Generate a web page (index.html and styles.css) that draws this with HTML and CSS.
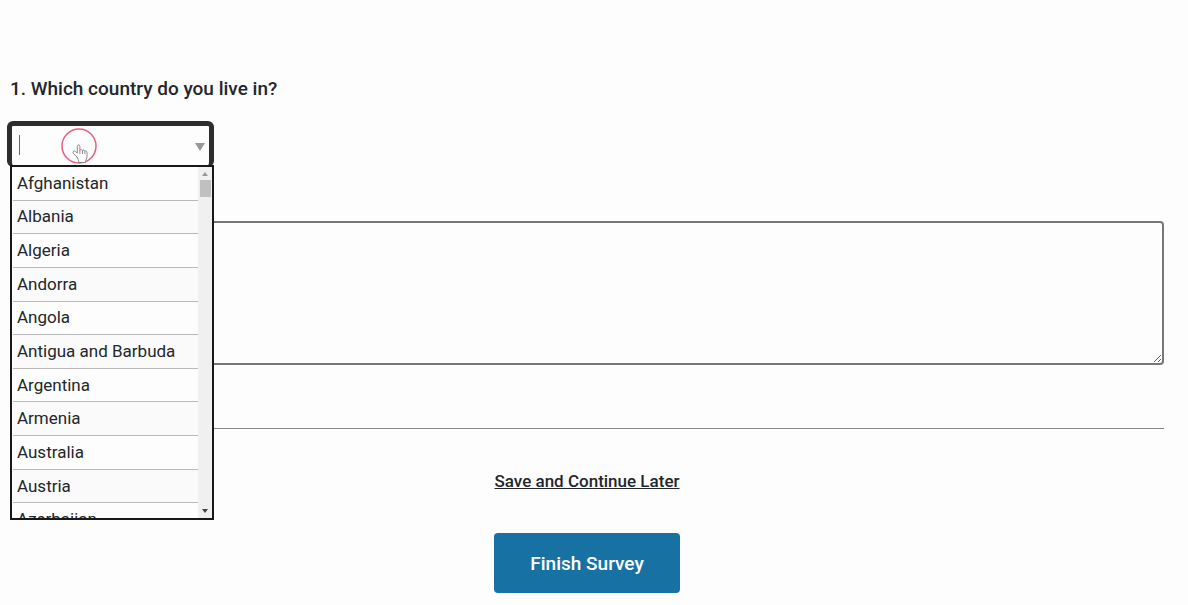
FILE: index.html
```
<!DOCTYPE html>
<html lang="en">
<head>
  <meta charset="UTF-8">
  <title>Survey</title>
  <link rel="stylesheet" href="styles.css">
</head>
<body>
  <form class="survey">
    <div class="question">
      <label class="question-title" for="country">1. Which country do you live in?</label>
      <div class="combo">
        <input type="text" id="country" class="combo-input" role="combobox" aria-expanded="true" aria-controls="country-list" autocomplete="off">
        <span class="caret"></span>
        <span class="arrow"></span>

        <!-- Open country menu -->
        <div class="menu">
          <ul class="options" id="country-list" role="listbox">
            <li role="option">Afghanistan</li>
            <li role="option">Albania</li>
            <li role="option">Algeria</li>
            <li role="option">Andorra</li>
            <li role="option">Angola</li>
            <li role="option">Antigua and Barbuda</li>
            <li role="option">Argentina</li>
            <li role="option">Armenia</li>
            <li role="option">Australia</li>
            <li role="option">Austria</li>
            <li role="option">Azerbaijan</li>
          </ul>
          <div class="scrollbar">
            <span class="scroll-up"></span>
            <span class="scroll-thumb"></span>
            <span class="scroll-down"></span>
          </div>
        </div>

        <svg class="pointer" width="38" height="38" viewBox="0 0 38 38">
          <circle cx="19" cy="19" r="17" fill="none" stroke="#e5607f" stroke-width="1.5"/>
          <path d="M17 30 L13.2 26 C12.2 24.4 14.3 23.2 15.7 24.6 L17.3 26.2 V19.3 C17.3 17.4 19.9 17.4 19.9 19.3 V23.4 C20.3 22.2 22.4 22.4 22.5 23.7 C23 22.8 24.7 23 24.9 24.3 C25.6 23.6 27 24 27 25.4 V29.5 C27 31.5 25.7 32.5 25.5 35.5 H18.8 C18.7 33 17.8 31.4 17 30 Z" fill="#fff" stroke="#888" stroke-width="1"/>
          <path d="M19.9 23.4 V27 M22.5 23.7 V27 M24.9 24.3 V27" fill="none" stroke="#888" stroke-width="1"/>
        </svg>
      </div>
    </div>

    <textarea class="comments" aria-label="Comments"></textarea>
    <hr class="divider">

    <div class="actions">
      <a class="save-link" href="#">Save and Continue Later</a>
      <button class="finish" type="submit">Finish Survey</button>
    </div>
  </form>
</body>
</html>
```
FILE: styles.css
```
* {
  box-sizing: border-box;
}

body {
  margin: 0;
  background: #fdfdfd;
  color: #23272b;
  font-family: Roboto, sans-serif;
  font-size: 17px;
}

.survey {
  padding: 76px 24px 12px 10px;
}

.question-title {
  display: block;
  font-size: 19px;
  font-weight: 500;
  line-height: 26px;
}

.combo {
  position: relative;
  width: 207px;
  margin: 19px 0 0 -3px;
}

.combo-input {
  display: block;
  width: 100%;
  height: 46px;
  padding: 0 28px 0 8px;
  border: 5px solid #2d2d2f;
  border-bottom-width: 2px;
  border-radius: 6px;
  outline: none;
  background: #fdfdfd;
  font: inherit;
}

.caret {
  position: absolute;
  left: 12px;
  top: 14px;
  width: 1px;
  height: 20px;
  background: #666;
}

.arrow {
  position: absolute;
  right: 9px;
  top: 22px;
  border: 5px solid transparent;
  border-top: 8px solid #999;
  border-bottom: 0;
}

.menu {
  position: absolute;
  left: 3px;
  right: 0;
  top: 44px;
  z-index: 1;
  display: flex;
  height: 355px;
  border: 2px solid #18181a;
  background: #fdfdfd;
  overflow: hidden;
}

.options {
  flex: 1;
  display: grid;
  grid-template-rows: repeat(11, 1fr);
  height: 370px;
  margin: 0;
  padding: 0 0 0 1px;
  list-style: none;
}

.options li {
  display: flex;
  align-items: center;
  padding: 0 0 1px 4px;
  border-bottom: 1px solid #b9b9bb;
}

.options li:nth-child(even) {
  background: #fafafb;
}

.scrollbar {
  display: flex;
  flex-direction: column;
  align-items: center;
  width: 14px;
  padding: 5px 0 5px;
  background: #f0f0f1;
}

.scroll-up {
  border: 3px solid transparent;
  border-top: 0;
  border-bottom: 4px solid #999;
}

.scroll-thumb {
  width: 11px;
  height: 17px;
  margin-top: 4px;
  background: #c0c0c1;
}

.scroll-down {
  margin-top: auto;
  border: 3px solid transparent;
  border-top: 4px solid #444;
  border-bottom: 0;
}

.pointer {
  position: absolute;
  left: 53px;
  top: 6px;
}

.comments {
  display: block;
  width: 100%;
  height: 144px;
  margin-top: 54px;
  border: 2px solid #777;
  border-radius: 4px;
  background: #fdfdfd;
  font: inherit;
}

.divider {
  height: 1px;
  margin: 63px 0 0;
  border: 0;
  background: #888;
}

.actions {
  display: flex;
  flex-direction: column;
  align-items: center;
  gap: 40px;
  margin-top: 40px;
}

.save-link {
  color: inherit;
  font-weight: 500;
  line-height: 24px;
}

.finish {
  height: 60px;
  padding: 0 36px;
  border: 0;
  border-radius: 4px;
  background: #1772a3;
  color: #fff;
  font: 500 19px Roboto, sans-serif;
  cursor: pointer;
}
```
